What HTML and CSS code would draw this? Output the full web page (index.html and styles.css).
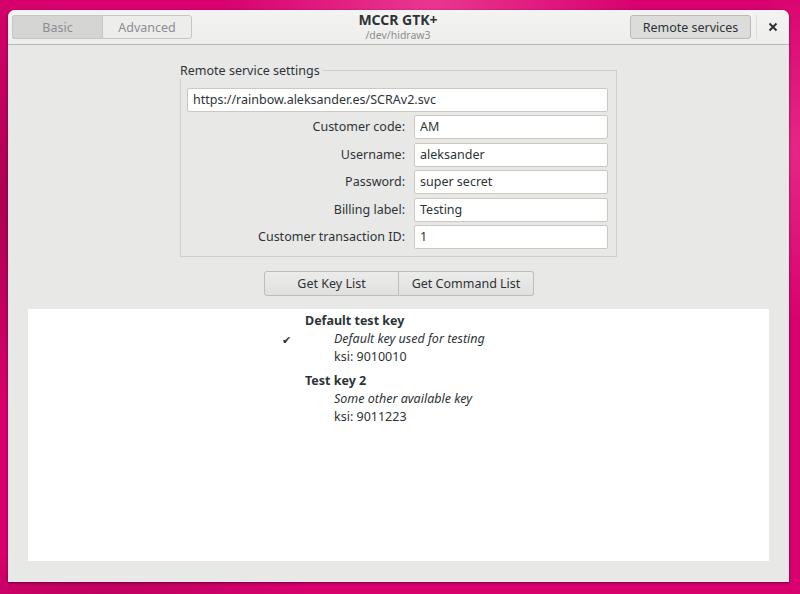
FILE: index.html
```html
<!DOCTYPE html>
<html>
<head>
<meta charset="utf-8">
<link rel="stylesheet" href="styles.css">
</head>
<body>
<div class="window">
  <header class="headerbar">
    <div class="stack-switcher">
      <button class="seg seg-checked">Basic</button>
      <button class="seg">Advanced</button>
    </div>
    <div class="titles">
      <div class="title">MCCR GTK+</div>
      <div class="subtitle">/dev/hidraw3</div>
    </div>
    <div class="right-controls">
      <button class="btn-remote">Remote services</button>
      <span class="sep"></span>
      <button class="btn-close">
        <svg width="10" height="10" viewBox="0 0 10 10"><path d="M1.5 1.5 L8.5 8.5 M8.5 1.5 L1.5 8.5" stroke="#2e3436" stroke-width="2" stroke-linecap="butt"/></svg>
      </button>
    </div>
  </header>
  <main class="content">
    <fieldset class="frame">
      <legend class="frame-label">Remote service settings</legend>
      <div class="entry entry-wide">https://rainbow.aleksander.es/SCRAv2.svc</div>
      <div class="form-grid">
        <label class="flabel">Customer code:</label><div class="entry">AM</div>
        <label class="flabel">Username:</label><div class="entry">aleksander</div>
        <label class="flabel">Password:</label><div class="entry">super secret</div>
        <label class="flabel">Billing label:</label><div class="entry">Testing</div>
        <label class="flabel">Customer transaction ID:</label><div class="entry">1</div>
      </div>
    </fieldset>
    <div class="linked">
      <button class="lbtn lbtn-first">Get Key List</button>
      <button class="lbtn lbtn-last">Get Command List</button>
    </div>
    <div class="list">
      <div class="item">
        <span class="check">✔</span>
        <div class="item-body">
          <div class="item-title">Default test key</div>
          <div class="item-desc">Default key used for testing</div>
          <div class="item-ksi">ksi: 9010010</div>
        </div>
      </div>
      <div class="item">
        <span class="check"></span>
        <div class="item-body">
          <div class="item-title">Test key 2</div>
          <div class="item-desc">Some other available key</div>
          <div class="item-ksi">ksi: 9011223</div>
        </div>
      </div>
    </div>
  </main>
</div>
</body>
</html>
```
FILE: styles.css
```css
html, body {
  margin: 0;
  padding: 0;
  height: 594px;
  overflow: hidden;
}
body {
  font-family: "Noto Sans", "DejaVu Sans", sans-serif;
  font-size: 12.5px;
  color: #2e3436;
  background:
    radial-gradient(ellipse 300px 120px at 430px 5px, rgba(255,120,190,0.45), rgba(255,120,190,0) 70%),
    radial-gradient(ellipse 80px 250px at 795px 150px, rgba(255,110,180,0.35), rgba(255,110,180,0) 70%),
    radial-gradient(ellipse 200px 300px at 0px 200px, rgba(120,0,50,0.45), rgba(120,0,50,0) 70%),
    radial-gradient(ellipse 300px 60px at 100px 594px, rgba(140,0,70,0.35), rgba(140,0,70,0) 70%),
    #d8016d;
}
.window {
  margin: 10px 0 0 8px;
  width: 781px;
  height: 572px;
  border-radius: 7px 7px 0 0;
  background: #e8e8e7;
  box-shadow: 0 1px 3px rgba(0,0,0,0.45);
  display: flex;
  flex-direction: column;
  overflow: hidden;
}
.headerbar {
  height: 34px;
  border-bottom: 1px solid #b6b6b3;
  background: linear-gradient(#f3f3f2, #eeeeed);
  display: grid;
  grid-template-columns: 1fr auto 1fr;
  align-items: center;
  padding: 0 5px 0 4px;
}
.stack-switcher {
  display: flex;
  height: 24px;
  justify-self: start;
}
button {
  font-family: inherit;
  font-size: 12.5px;
  margin: 0;
}
.seg {
  width: 90px;
  height: 24px;
  border: 1px solid #c6c6c4;
  background: #ededec;
  color: #8b8e8f;
  padding: 0;
}
.seg-checked {
  width: 90px;
  background: #d5d5d4;
  border-radius: 3px 0 0 3px;
  border-right: none;
}
.seg + .seg {
  border-radius: 0 3px 3px 0;
}
.titles {
  text-align: center;
  padding-top: 1px;
}
.title {
  font-weight: bold;
  font-size: 14px;
  line-height: 16px;
}
.subtitle {
  font-size: 10.5px;
  line-height: 15px;
  color: #8b8e8f;
}
.right-controls {
  display: flex;
  align-items: center;
  justify-self: end;
}
.btn-remote {
  width: 121px;
  height: 24px;
  border: 1px solid #b9b9b7;
  border-radius: 3px;
  background: #dcdcdb;
  color: #2e3436;
  padding: 0;
}
.sep {
  width: 1px;
  height: 24px;
  background: #dededd;
  margin: 0 5px;
}
.btn-close {
  width: 22px;
  height: 24px;
  border: none;
  background: transparent;
  display: flex;
  align-items: center;
  justify-content: center;
  padding: 0;
}
.content {
  flex: 1;
  display: flex;
  flex-direction: column;
  padding: 17px 20px 21px 20px;
}
.frame {
  box-sizing: border-box;
  width: 437px;
  margin: 0 auto;
  border: 1px solid #cfcfcd;
  padding: 9px 8px 7px 6px;
  min-width: 0;
}
.frame-label {
  padding: 0 2px 0 0;
  margin-left: -7px;
  font-size: 12.5px;
  line-height: 17px;
}
.entry {
  box-sizing: border-box;
  height: 24px;
  background: #ffffff;
  border: 1px solid #cdc7c2;
  border-radius: 2px;
  padding: 0 5px;
  line-height: 22px;
  white-space: nowrap;
  overflow: hidden;
}
.entry-wide {
  margin-bottom: 3px;
}
.form-grid {
  display: grid;
  grid-template-columns: 1fr 194px;
  column-gap: 9px;
  row-gap: 3.5px;
}
.flabel {
  text-align: right;
  line-height: 24px;
  white-space: nowrap;
}
.linked {
  display: flex;
  justify-content: center;
  margin-top: 14px;
  margin-left: 1px;
}
.lbtn {
  box-sizing: border-box;
  height: 25px;
  width: 135px;
  border: 1px solid #bdbdbb;
  background: linear-gradient(#ececeb, #e0e0df);
  color: #2e3436;
  padding: 0;
}
.lbtn-first {
  border-radius: 3px 0 0 3px;
}
.lbtn-last {
  border-left: none;
  border-radius: 0 3px 3px 0;
}
.list {
  flex: 1;
  margin-top: 13px;
  background: #ffffff;
  padding: 2px 0 0 254px;
}
.item {
  display: flex;
  margin-bottom: 5px;
}
.check {
  width: 23px;
  font-size: 11px;
  padding-top: 22px;
  line-height: 14px;
}
.item-title {
  font-weight: bold;
  line-height: 19px;
}
.item-desc {
  font-style: italic;
  line-height: 18px;
  padding-left: 29px;
}
.item-ksi {
  line-height: 18px;
  padding-left: 29px;
}
```
